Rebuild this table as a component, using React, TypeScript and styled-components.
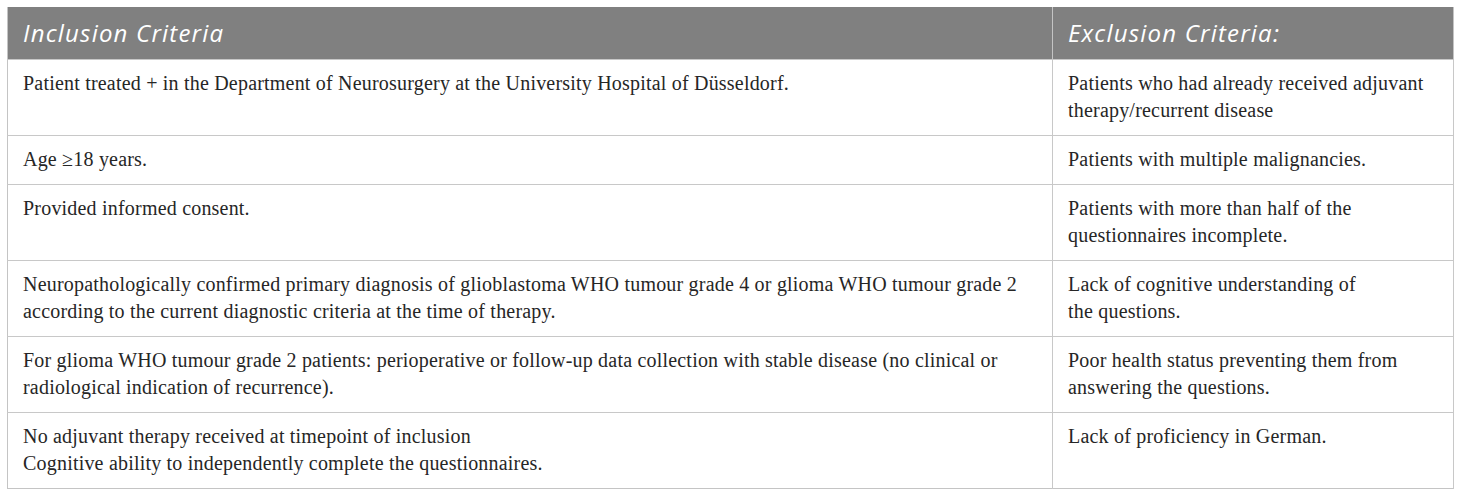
import React from "react";
import styled, { createGlobalStyle } from "styled-components";

const Global = createGlobalStyle`
  html, body { margin: 0; padding: 0; background: #ffffff; }
  body { padding: 7px 0 0 7px; }
`;

const Table = styled.table`
  width: 1446px;
  border-collapse: collapse;
  table-layout: fixed;
  border: 1px solid #c4c4c4;
  border-top: none;
`;

const HeadCell = styled.th<{ $w: number }>`
  width: ${(p) => p.$w}px;
  height: 52px;
  box-sizing: border-box;
  background: #808080;
  color: #ffffff;
  font-family: "Open Sans", "DejaVu Sans", sans-serif;
  font-style: italic;
  font-weight: 400;
  font-size: 24px;
  letter-spacing: 1.2px;
  text-align: left;
  padding: 0 0 0 15px;
  border-right: 1px solid #c4c4c4;
  vertical-align: middle;
`;

const Cell = styled.td`
  box-sizing: border-box;
  font-family: "Liberation Serif", "Times New Roman", serif;
  font-size: 20px;
  letter-spacing: 0.2px;
  line-height: 27px;
  color: #262626;
  padding: 10px 15px 11px 15px;
  vertical-align: top;
  border-top: 1px solid #c8c8c8;
  border-right: 1px solid #c8c8c8;
`;

const rows: [string[], string[]][] = [
  [
    ["Patient treated + in the Department of Neurosurgery at the University Hospital of Düsseldorf."],
    ["Patients who had already received adjuvant", "therapy/recurrent disease"],
  ],
  [["Age ≥18 years."], ["Patients with multiple malignancies."]],
  [["Provided informed consent."], ["Patients with more than half of the", "questionnaires incomplete."]],
  [
    [
      "Neuropathologically confirmed primary diagnosis of glioblastoma WHO tumour grade 4 or glioma WHO tumour grade 2",
      "according to the current diagnostic criteria at the time of therapy.",
    ],
    ["Lack of cognitive understanding of", "the questions."],
  ],
  [
    [
      "For glioma WHO tumour grade 2 patients: perioperative or follow-up data collection with stable disease (no clinical or",
      "radiological indication of recurrence).",
    ],
    ["Poor health status preventing them from", "answering the questions."],
  ],
  [
    ["No adjuvant therapy received at timepoint of inclusion", "Cognitive ability to independently complete the questionnaires."],
    ["Lack of proficiency in German."],
  ],
];

const Line = styled.span`
  display: block;
  white-space: nowrap;
`;

const Lines = ({ lines }: { lines: string[] }) => (
  <>
    {lines.map((l, i) => (
      <Line key={i}>{l}</Line>
    ))}
  </>
);

export default function App() {
  return (
    <>
      <Global />
      <Table>
        <thead>
          <tr>
            <HeadCell $w={1045}>Inclusion Criteria</HeadCell>
            <HeadCell $w={401}>Exclusion Criteria:</HeadCell>
          </tr>
        </thead>
        <tbody>
          {rows.map(([a, b], i) => (
            <tr key={i}>
              <Cell>
                <Lines lines={a} />
              </Cell>
              <Cell>
                <Lines lines={b} />
              </Cell>
            </tr>
          ))}
        </tbody>
      </Table>
    </>
  );
}
